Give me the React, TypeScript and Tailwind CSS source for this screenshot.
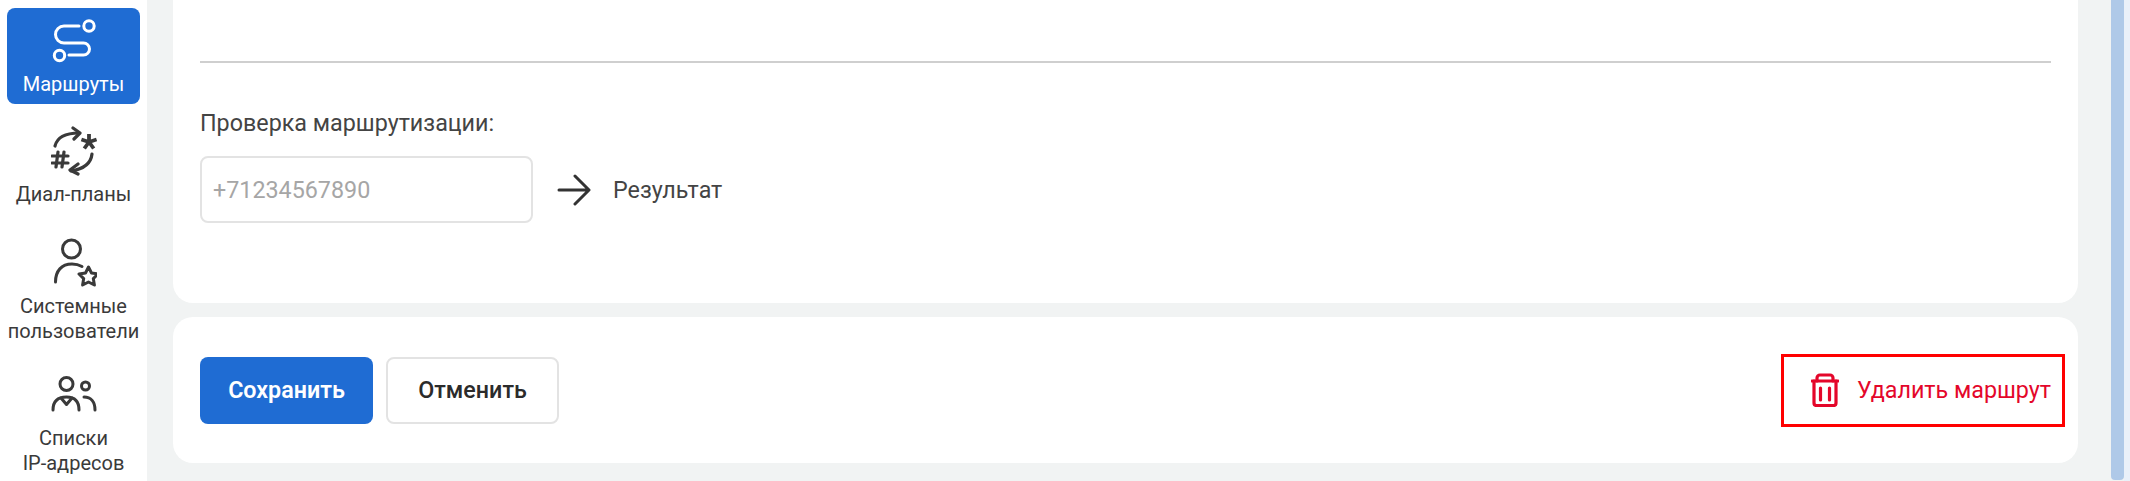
import React from 'react'

const RouteIcon = () => (
  <svg width="46" height="44" viewBox="0 0 46 44" fill="none" stroke="currentColor" strokeWidth="3" strokeLinecap="round">
    <circle cx="38" cy="7" r="5.200" />
    <circle cx="8.500" cy="36.500" r="5.200" />
    <path d="M28 7H13a8.500 8.500 0 0 0 0 17h19.500a6 6 0 0 1 0 12H18" />
  </svg>
)

const DialIcon = () => (
  <svg width="46" height="50" viewBox="0 0 46 50" fill="none" stroke="currentColor" strokeWidth="3.200" strokeLinecap="round" strokeLinejoin="round">
    <path d="M4 20C6 12 14 7 28 7" />
    <path d="M22 2l7 5-6 6" />
    <path d="M41 28c-1 9-8 15-21 17" />
    <path d="M27 38l-8 6 8 4" />
    <path d="M38 16V8M38 16l7.600-2.500M38 16l4.700 6.500M38 16l-4.700 6.500M38 16l-7.600-2.500" strokeWidth="3.800" strokeLinecap="butt" />
    <path d="M7 26l-2 15M13 26l-2 15M1 30h16M1 37h16" strokeWidth="3.200" />
  </svg>
)

const UserStarIcon = () => (
  <svg width="46" height="50" viewBox="0 0 46 50" fill="none" stroke="currentColor" strokeWidth="3" strokeLinecap="round" strokeLinejoin="round">
    <circle cx="20.500" cy="11" r="9" />
    <path d="M4.500 44c0-11 6-18 16.500-18 4 0 7 .8 10 2.500" />
    <path d="M37.500 29l3 6 6.500 1-4.700 4.600 1.100 6.400-5.900-3-5.900 3 1.100-6.400-4.700-4.600 6.500-1z" />
  </svg>
)

const ListIcon = () => (
  <svg width="46" height="38" viewBox="0 0 46 38" fill="none" stroke="currentColor" strokeWidth="3" strokeLinecap="round" strokeLinejoin="round">
    <circle cx="15.500" cy="9" r="6.500" />
    <circle cx="34.500" cy="11" r="4" />
    <path d="M2 35c0-9 5-13 13.500-13S28 26 28 35" />
    <path d="M10 23l5.500 6.500L21 23" />
    <path d="M33 22c7 0 11 5 11 13" />
  </svg>
)

const NavItem = ({ icon, label, active, className }: {
  icon: React.ReactNode
  label: React.ReactNode
  active?: boolean
  className: string
}) => (
  <div className={`flex flex-col items-center text-center text-[20px] leading-[25px] ${className} ${active ? 'bg-[#1F6CD3] text-white rounded-lg' : 'text-[#3a3a3a]'}`}>
    {icon}
    <span className="whitespace-nowrap">{label}</span>
  </div>
)

export default function App() {
  return (
    <div className="flex h-[481px] w-[2130px] overflow-hidden bg-[#F1F3F3] font-['Roboto',sans-serif]">
      <aside className="w-[147px] h-full shrink-0 bg-white px-[7px] pt-2 flex flex-col">
        <NavItem active className="h-[96px] shrink-0 pt-[11px] gap-[9px]" icon={<RouteIcon />} label="Маршруты" />
        <NavItem className="h-[128px] shrink-0 pt-[22px] gap-[6px]" icon={<DialIcon />} label="Диал-планы" />
        <NavItem className="h-[132px] shrink-0 pt-[6px] gap-[6px]" icon={<UserStarIcon />} label={<>Системные<br />пользователи</>} />
        <NavItem className="pt-[11px] gap-[13px]" icon={<ListIcon />} label={<>Списки<br />IP-адресов</>} />
      </aside>

      <main className="w-[1905px] ml-[26px] shrink-0 flex flex-col gap-[14px]">
        <section className="h-[303px] bg-white rounded-b-[20px] px-[27px] pt-[61px]">
          <div className="h-[2px] bg-[#CFCFCF]" />
          <p className="mt-[46px] text-[23.3px] leading-[28px] text-[#444]">Проверка маршрутизации:</p>
          <div className="mt-[19px] flex items-center">
            <input
              readOnly
              placeholder="+71234567890"
              className="w-[333px] h-[67px] px-[11px] border-2 border-[#E3E3E3] rounded-lg text-[23.3px] text-[#444] placeholder:text-[#A6A6A6] outline-none"
            />
            <svg className="ml-[24px] text-[#333]" width="34" height="34" viewBox="0 0 34 34" fill="none" stroke="currentColor" strokeWidth="3" strokeLinecap="round" strokeLinejoin="round">
              <path d="M2 17h29M18 3l14 14-14 14" />
            </svg>
            <span className="ml-[22px] pt-[2px] text-[23.3px] text-[#444]">Результат</span>
          </div>
        </section>

        <section className="h-[146px] bg-white rounded-[20px] pl-[27px] pr-[13px] flex items-center justify-between">
          <div className="flex gap-[13px]">
            <button className="w-[173px] h-[67px] rounded-lg bg-[#1F6CD3] text-white text-[23.3px] font-semibold">Сохранить</button>
            <button className="w-[173px] h-[67px] rounded-lg bg-white border-2 border-[#E3E3E3] text-[#2b2b2b] text-[23.3px] font-medium">Отменить</button>
          </div>
          <div className="w-[284px] h-[73px] border-[3px] border-[#FF0000] flex items-center pl-[27px] gap-[18px] text-[#E4062A]">
            <svg width="28" height="34" viewBox="0 0 28 34" fill="none" stroke="currentColor" strokeWidth="3.200" strokeLinecap="round" strokeLinejoin="round">
              <path d="M1 8h26" />
              <path d="M6 8V5a3 3 0 0 1 3-3h10a3 3 0 0 1 3 3v3" />
              <path d="M3 8v22a2.500 2.500 0 0 0 2.500 2.500h17A2.500 2.500 0 0 0 25 30V8" />
              <path d="M9.500 15v12M18.500 15v12" />
            </svg>
            <span className="text-[23.3px] whitespace-nowrap">Удалить маршрут</span>
          </div>
        </section>
      </main>

      <div className="ml-[33px] w-[13px] h-[480px] bg-[#AFC9E8] rounded-b-[4px] shrink-0" />
      <div className="w-[12px] h-full bg-[#E9F0F9] shrink-0" />
    </div>
  )
}
